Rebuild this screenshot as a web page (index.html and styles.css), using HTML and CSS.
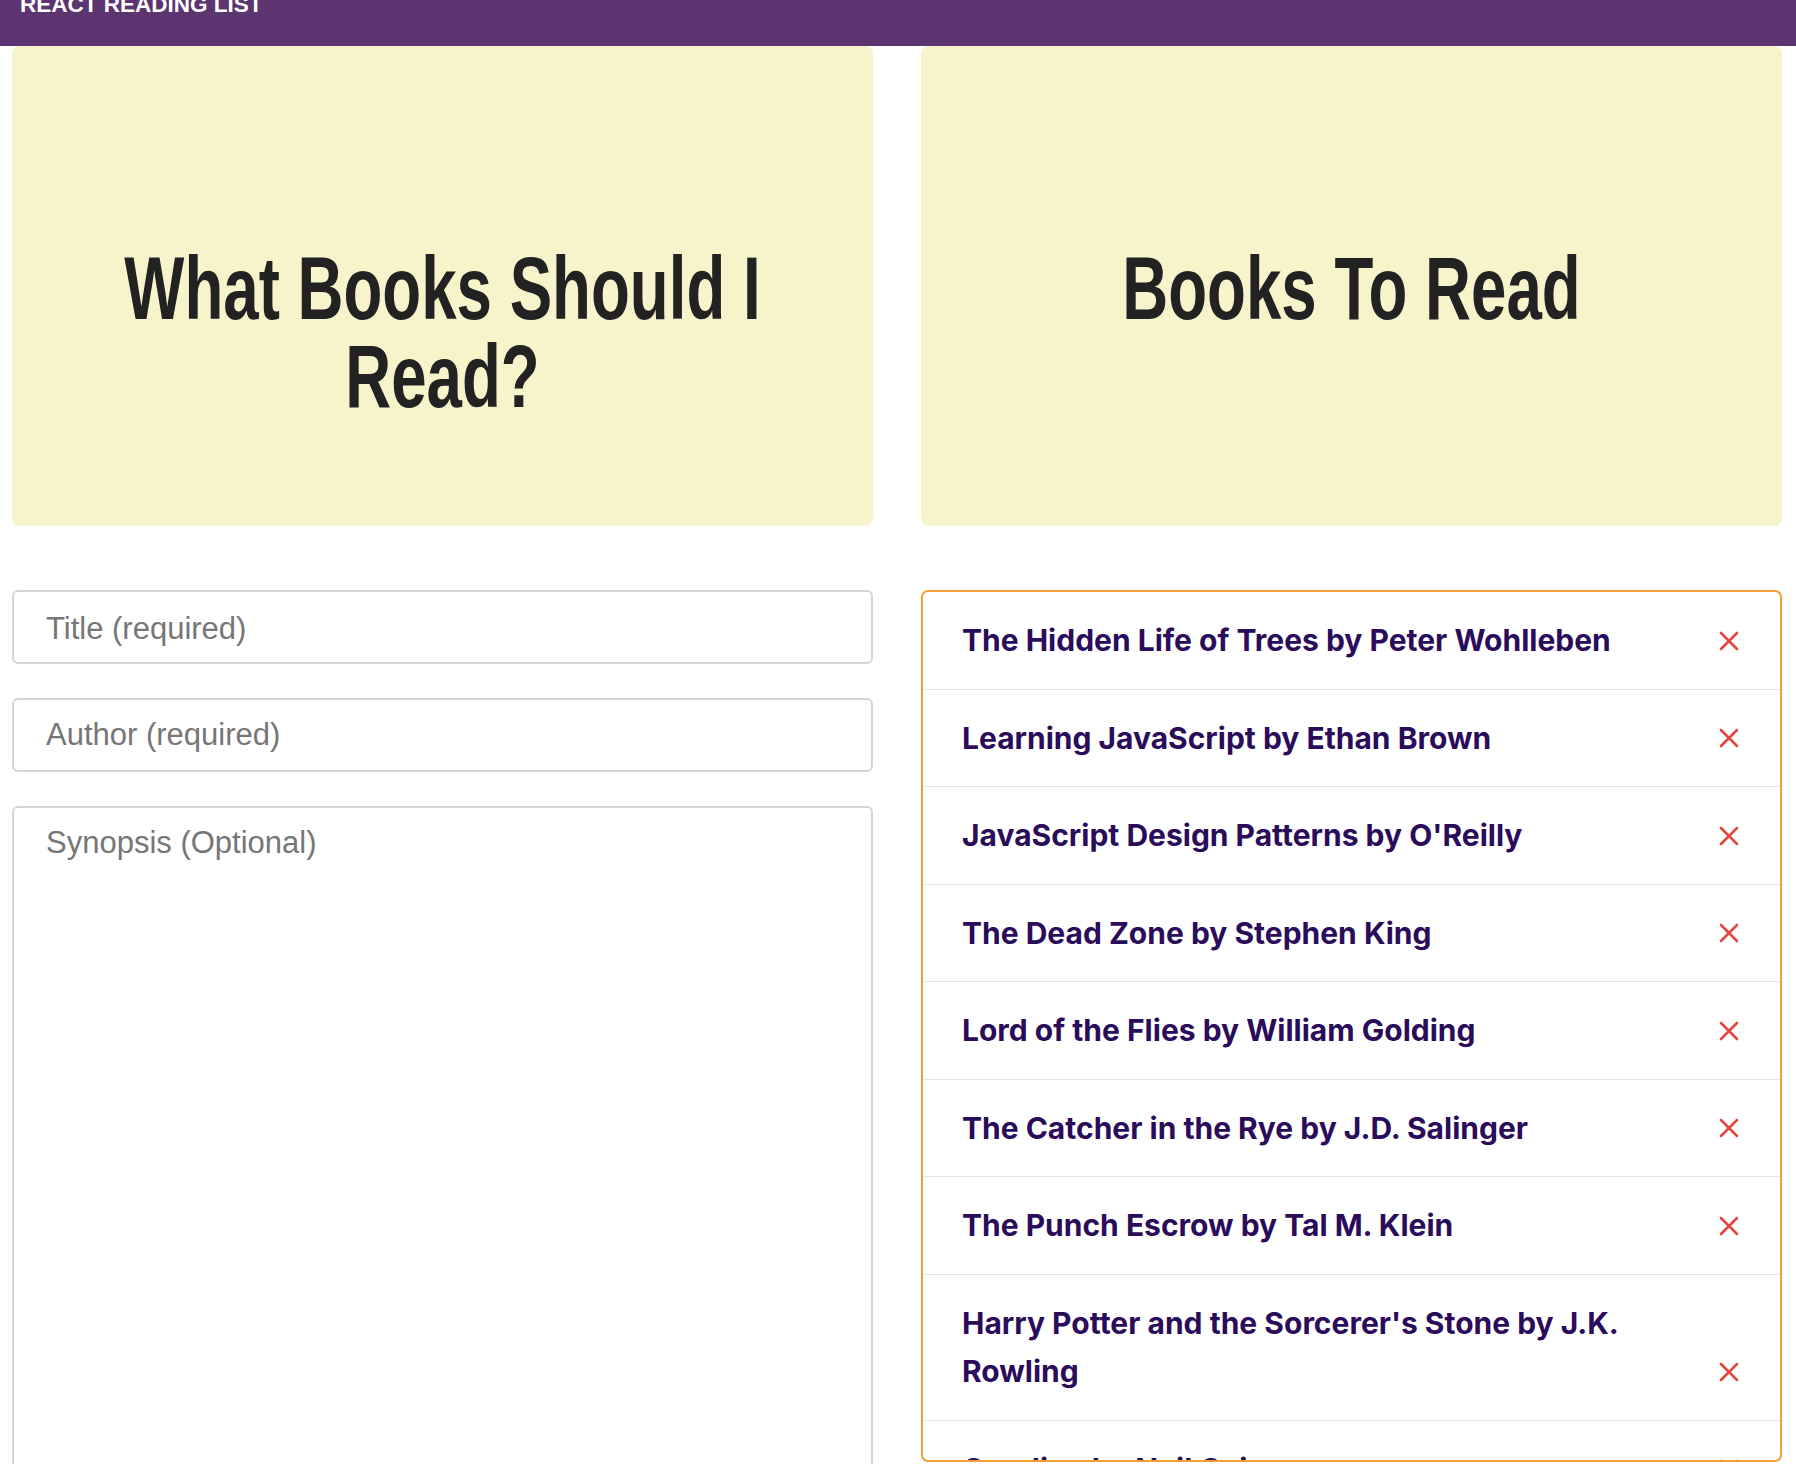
FILE: index.html
```html
<!DOCTYPE html>
<html lang="en">
<head>
<meta charset="utf-8">
<title>React Reading List</title>
<link rel="stylesheet" href="styles.css">
</head>
<body>
<header class="topbar">
  <div class="brand">REACT READING LIST</div>
</header>
<main class="layout">
  <section class="hero">
    <h1 class="hero-title">What Books Should I Read?</h1>
  </section>
  <section class="hero">
    <h1 class="hero-title">Books To Read</h1>
  </section>
  <form class="book-form">
    <input class="field field-title" type="text" placeholder="Title (required)">
    <input class="field" type="text" placeholder="Author (required)">
    <textarea class="field field-area" placeholder="Synopsis (Optional)"></textarea>
  </form>
  <ul class="book-list">
    <li class="book"><span class="book-name">The Hidden Life of Trees by Peter Wohlleben</span><span class="remove"><svg viewBox="0 0 20 20" width="20" height="20"><path d="M2 2 L18 18 M18 2 L2 18"/></svg></span></li>
    <li class="book"><span class="book-name">Learning JavaScript by Ethan Brown</span><span class="remove"><svg viewBox="0 0 20 20" width="20" height="20"><path d="M2 2 L18 18 M18 2 L2 18"/></svg></span></li>
    <li class="book"><span class="book-name">JavaScript Design Patterns by O'Reilly</span><span class="remove"><svg viewBox="0 0 20 20" width="20" height="20"><path d="M2 2 L18 18 M18 2 L2 18"/></svg></span></li>
    <li class="book"><span class="book-name">The Dead Zone by Stephen King</span><span class="remove"><svg viewBox="0 0 20 20" width="20" height="20"><path d="M2 2 L18 18 M18 2 L2 18"/></svg></span></li>
    <li class="book"><span class="book-name">Lord of the Flies by William Golding</span><span class="remove"><svg viewBox="0 0 20 20" width="20" height="20"><path d="M2 2 L18 18 M18 2 L2 18"/></svg></span></li>
    <li class="book"><span class="book-name">The Catcher in the Rye by J.D. Salinger</span><span class="remove"><svg viewBox="0 0 20 20" width="20" height="20"><path d="M2 2 L18 18 M18 2 L2 18"/></svg></span></li>
    <li class="book"><span class="book-name">The Punch Escrow by Tal M. Klein</span><span class="remove"><svg viewBox="0 0 20 20" width="20" height="20"><path d="M2 2 L18 18 M18 2 L2 18"/></svg></span></li>
    <li class="book"><span class="book-name">Harry Potter and the Sorcerer's Stone by J.K. Rowling</span><span class="remove"><svg viewBox="0 0 20 20" width="20" height="20"><path d="M2 2 L18 18 M18 2 L2 18"/></svg></span></li>
    <li class="book"><span class="book-name">Coraline by Neil Gaiman</span><span class="remove"><svg viewBox="0 0 20 20" width="20" height="20"><path d="M2 2 L18 18 M18 2 L2 18"/></svg></span></li>
  </ul>
</main>
</body>
</html>
```

FILE: styles.css
```css
html, body {
  margin: 0;
  padding: 0;
  overflow: hidden;
  background: #ffffff;
}

body {
  font-family: "Liberation Sans", Arial, sans-serif;
  height: 1464px;
}

.topbar {
  height: 46px;
  background: #5c3470;
  overflow: hidden;
  padding-left: 20px;
}

.brand {
  margin-top: -6px;
  font-family: "Liberation Sans", Arial, sans-serif;
  font-weight: 700;
  font-size: 22.5px;
  line-height: 22px;
  color: #ffffff;
}

.layout {
  display: grid;
  grid-template-columns: 1fr 1fr;
  column-gap: 48px;
  row-gap: 64px;
  padding: 0 14px 0 12px;
}

.hero {
  background: #f7f4cc;
  border-radius: 8px;
  padding: 198px 32px 106px;
  overflow: hidden;
}

.hero-title {
  margin: 0;
  width: calc(100% / 0.715);
  transform: scaleX(0.715);
  transform-origin: left top;
  text-align: center;
  font-family: "Liberation Sans", Arial, sans-serif;
  font-weight: 700;
  font-size: 89px;
  line-height: 88px;
  color: #222222;
}

.book-form {
  display: flex;
  flex-direction: column;
  gap: 34px;
}

.field {
  box-sizing: border-box;
  width: 100%;
  height: 74px;
  margin: 0;
  padding: 0 32px;
  border: 2px solid #d2d5da;
  border-radius: 6px;
  background: #ffffff;
  font-family: "Liberation Sans", Arial, sans-serif;
  font-size: 31px;
  color: #333333;
  outline: none;
}

.field-title {
  padding-top: 4px;
}

.field::placeholder {
  color: #767676;
}

.field-area {
  height: 720px;
  padding: 17px 32px;
  resize: none;
  line-height: normal;
}

.book-list {
  box-sizing: border-box;
  list-style: none;
  margin: 0;
  padding: 0;
  height: 872px;
  border: 2px solid #f0a035;
  border-radius: 7px;
  overflow: hidden;
}

.book {
  display: flex;
  align-items: flex-end;
  gap: 40px;
  padding: 24px 41px 24px 39px;
  border-bottom: 1px solid #e2e2e2;
}

.book-name {
  flex: 1;
  font-family: Inter, "Liberation Sans", sans-serif;
  font-weight: 700;
  font-size: 30px;
  line-height: 48.5px;
  letter-spacing: 0;
  color: #2a0c5a;
}

.remove {
  flex: none;
  width: 20px;
  height: 48px;
  display: flex;
  align-items: center;
  justify-content: center;
}

.remove svg {
  display: block;
  fill: none;
  stroke: #e5463f;
  stroke-width: 2.6;
  stroke-linecap: round;
}
```
